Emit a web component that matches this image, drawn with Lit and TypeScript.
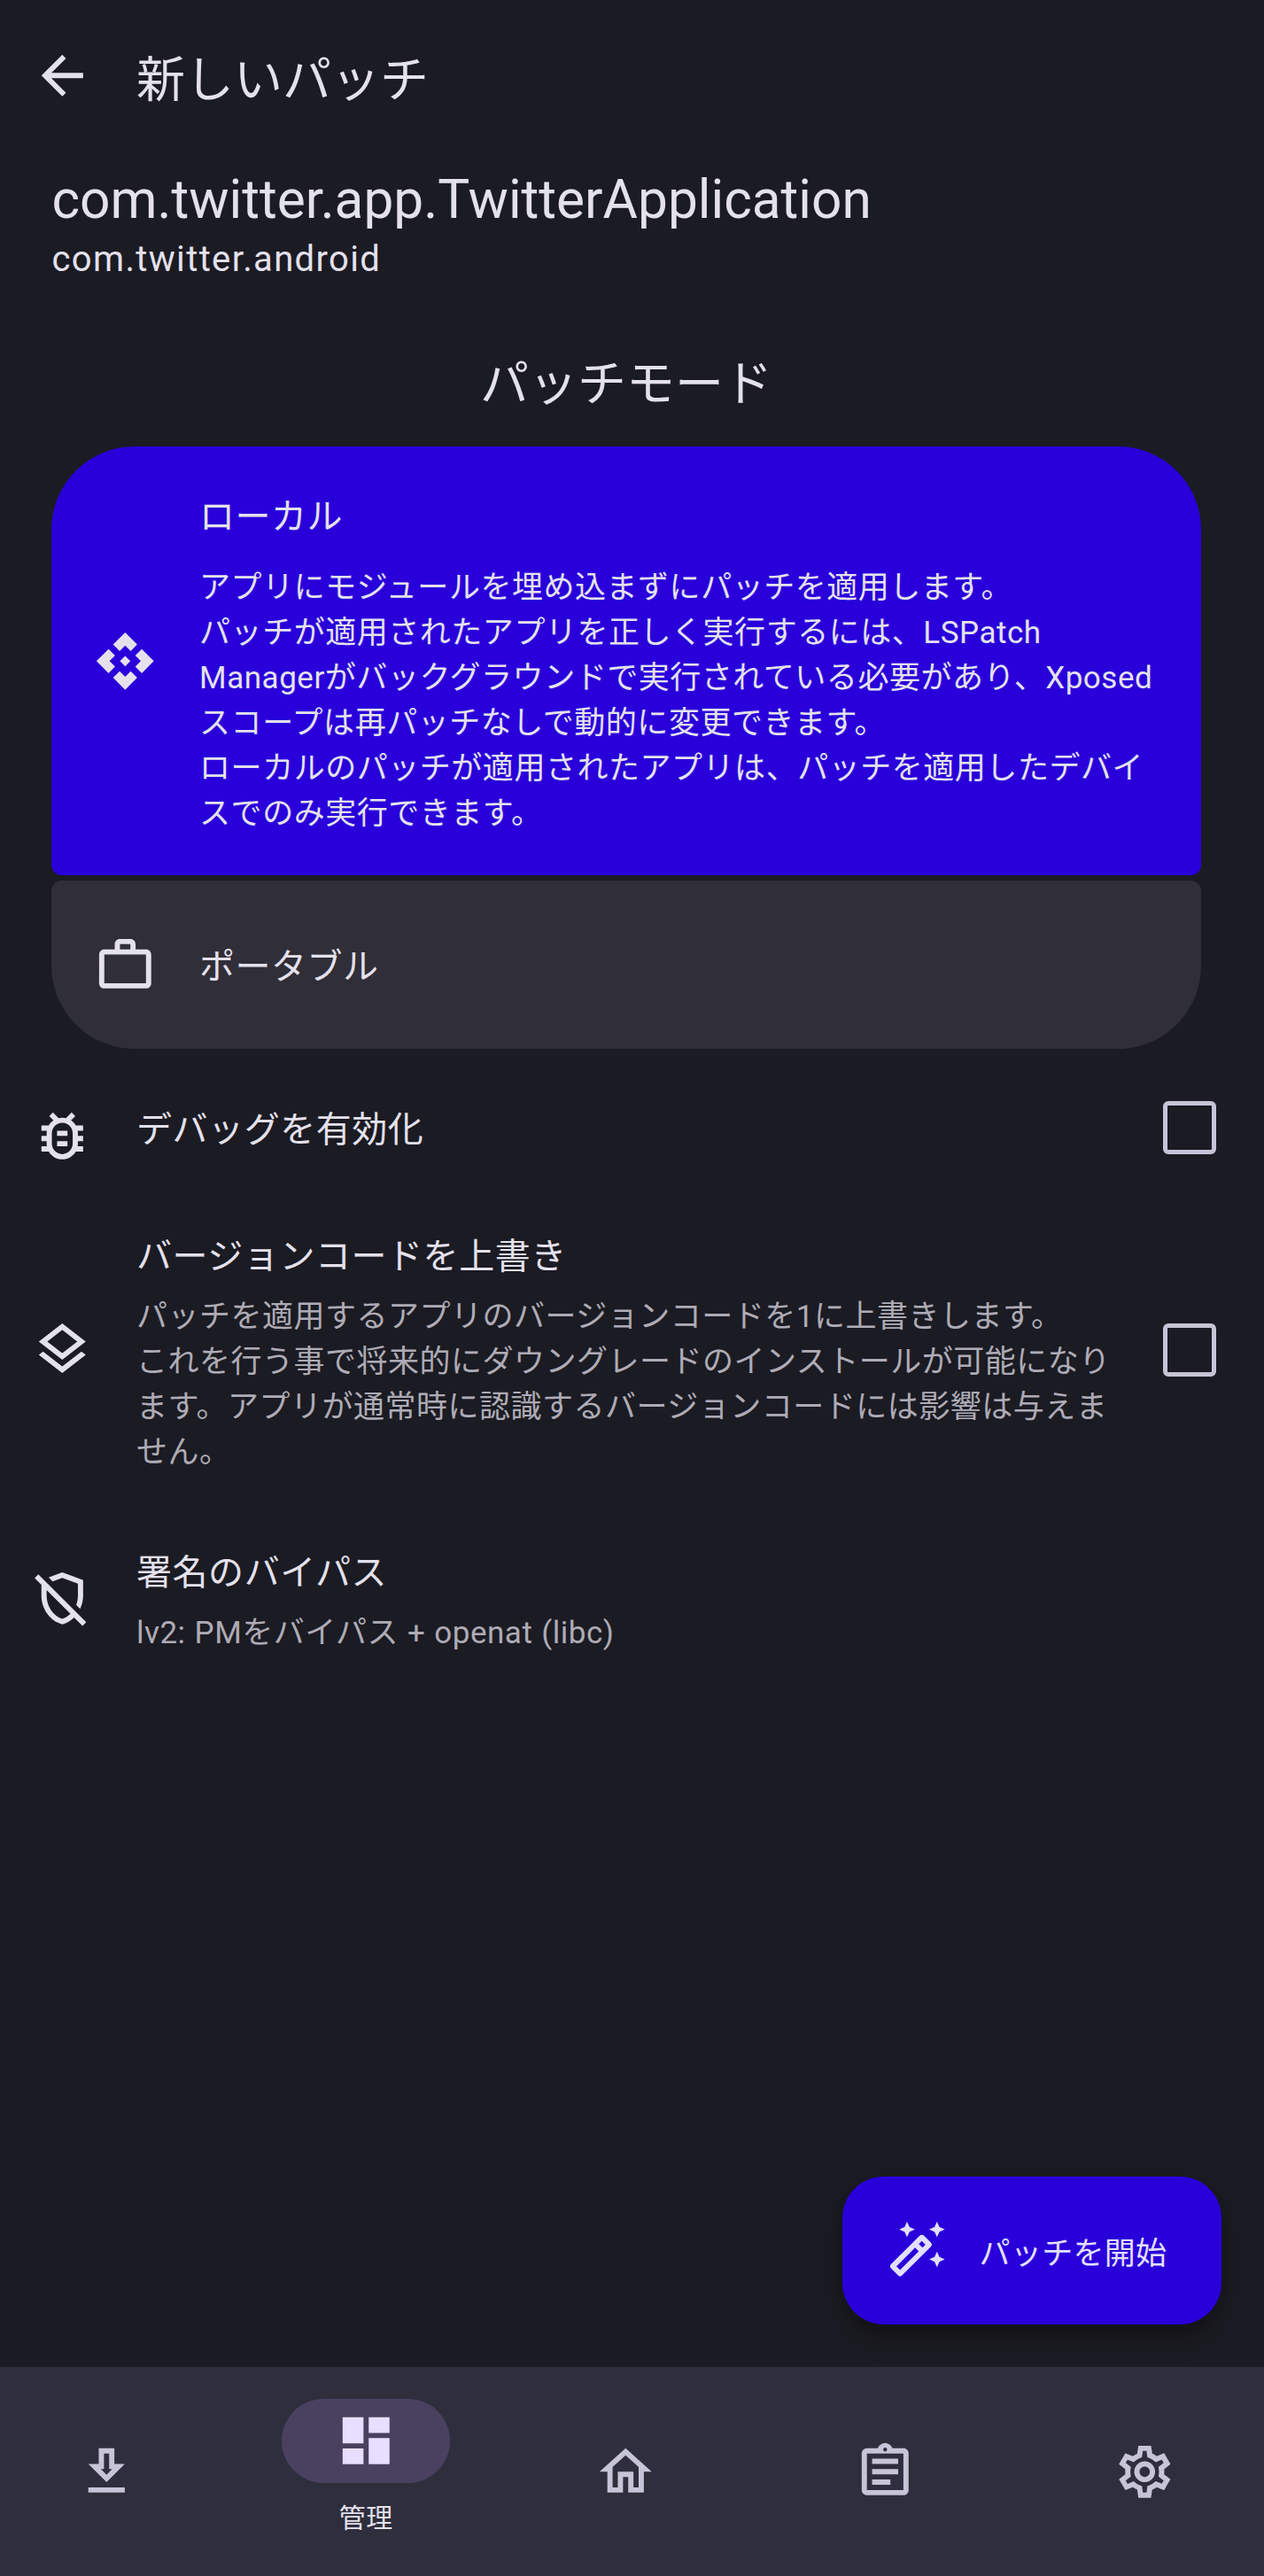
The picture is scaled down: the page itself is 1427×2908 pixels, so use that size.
import { LitElement, html, css, svg } from "lit";
import { customElement, property, state } from "lit/decorators.js";

const ICONS: Record<string, string> = {
  back: "M20 11H7.83l5.59-5.59L12 4l-8 8 8 8 1.41-1.41L7.83 13H20v-2z",
  api: "M14 12l-2 2-2-2 2-2 2 2zm-2-6l2.12 2.12 2.5-2.5L12 1 7.38 5.62l2.5 2.5L12 6zm-6 6l2.12-2.12-2.5-2.5L1 12l4.62 4.62 2.5-2.5L6 12zm12 0l-2.12 2.12 2.5 2.5L23 12l-4.62-4.62-2.5 2.5L18 12zm-6 6l-2.12-2.12-2.5 2.5L12 23l4.62-4.62-2.5-2.5L12 18z",
  work: "M14 6V4h-4v2h4zM4 8v11h16V8H4zm16-2c1.11 0 2 .89 2 2v11c0 1.11-.89 2-2 2H4c-1.11 0-2-.89-2-2l.01-11c0-1.11.88-2 1.99-2h4V4c0-1.11.89-2 2-2h4c1.11 0 2 .89 2 2v2h4z",
  bug: "M20 8h-2.81c-.45-.78-1.07-1.45-1.82-1.96L17 4.41 15.59 3l-2.17 2.17C12.96 5.06 12.49 5 12 5s-.96.06-1.41.17L8.41 3 7 4.41l1.62 1.63C7.88 6.55 7.26 7.22 6.81 8H4v2h2.09c-.05.33-.09.66-.09 1v1H4v2h2v1c0 .34.04.67.09 1H4v2h2.81c1.04 1.79 2.97 3 5.19 3s4.15-1.21 5.19-3H20v-2h-2.09c.05-.33.09-.66.09-1v-1h2v-2h-2v-1c0-.34-.04-.67-.09-1H20V8zm-4 4v3c0 2.21-1.79 4-4 4s-4-1.79-4-4v-4c0-2.21 1.79-4 4-4s4 1.79 4 4v1zm-6 2h4v2h-4zm0-4h4v2h-4z",
  layers: "M11.99 18.54l-7.37-5.73L3 14.07l9 7 9-7-1.63-1.27zM12 16l7.36-5.73L21 9l-9-7-9 7 1.63 1.27L12 16zm0-11.47L17.74 9 12 13.47 6.26 9 12 4.53z",
  shieldOff: "M12 4.14l6 2.25v4.7c0 1.19-.23 2.36-.64 3.44l1.51 1.51c.72-1.53 1.13-3.22 1.13-4.95V5l-8-3-5.22 1.96 1.55 1.55L12 4.14zM2.81 2.81L1.39 4.22 4 6.83v4.26c0 5.05 3.41 9.76 8 10.91 1.72-.43 3.28-1.36 4.55-2.62l3.23 3.23 1.41-1.41L2.81 2.81zM12 19.92c-3.45-1.13-6-4.82-6-8.83V8.83l9.14 9.14c-.9.88-1.96 1.56-3.14 1.95z",
  wand: "M20 7l.94-2.06L23 4l-2.06-.94L20 1l-.94 2.06L17 4l2.06.94zM8.5 7l.94-2.06L11.5 4l-2.06-.94L8.5 1l-.94 2.06L5.5 4l2.06.94zM20 12.5l-.94 2.06-2.06.94 2.06.94.94 2.06.94-2.06L23 15.5l-2.06-.94zM17.71 9.12l-2.83-2.83C14.68 6.1 14.43 6 14.17 6c-.26 0-.51.1-.71.29L2.29 17.46c-.39.39-.39 1.02 0 1.41l2.83 2.83c.2.2.45.3.71.3s.51-.1.71-.29l11.17-11.17c.39-.39.39-1.03 0-1.42zM14.17 8.42l1.41 1.41L14.41 11 13 9.59l1.17-1.17zM5.83 19.59l-1.41-1.41L11.59 11 13 12.41l-7.17 7.18z",
  download: "M13 5v6h1.17L12 13.17 9.83 11H11V5h2m2-2H9v6H5l7 7 7-7h-4V3zm4 15H5v2h14v-2z",
  dashboard: "M3 13h8V3H3v10zm0 8h8v-6H3v6zm10 0h8V11h-8v10zm0-18v6h8V3h-8z",
  home: "M12 5.69l5 4.5V18h-2v-6H9v6H7v-7.81l5-4.5M12 3L2 12h3v8h6v-6h2v6h6v-8h3L12 3z",
  assignment: "M7 15h7v2H7zm0-4h10v2H7zm0-4h10v2H7zm12-4h-4.18C14.4 1.84 13.3 1 12 1c-1.3 0-2.4.84-2.82 2H5c-.14 0-.27.01-.4.04-.39.08-.74.28-1.01.55-.18.18-.33.4-.43.64-.1.23-.16.49-.16.77v14c0 .27.06.54.16.78s.25.45.43.64c.27.27.62.47 1.01.55.13.02.26.03.4.03h14c1.1 0 2-.9 2-2V5c0-1.1-.9-2-2-2zm-7-.25c.41 0 .75.34.75.75s-.34.75-.75.75-.75-.34-.75-.75.34-.75.75-.75zM19 19H5V5h14v14z",
  settings: "M19.44 12.99l.01-.02c.04-.32.08-.64.08-.99 0-.34-.03-.66-.07-.98l.01.02 2.44-1.92-2.43-4.22-2.87 1.16.01.01c-.52-.4-1.09-.74-1.71-1h.01L14.44 2H9.57l-.44 3.07h.01c-.62.26-1.19.6-1.71 1l.01-.01-2.88-1.17-2.44 4.22 2.44 1.92.01-.02c-.04.32-.07.65-.07.98 0 .35.03.68.08 1l-.01-.02-2.1 1.65-.33.26 2.43 4.2 2.88-1.15-.02-.04c.53.41 1.1.75 1.73 1.01h-.03L9.58 22h4.85s.03-.18.06-.42l.38-2.65h-.01c.62-.26 1.2-.6 1.73-1.01l-.02.04 2.88 1.15 2.43-4.2s-.14-.12-.33-.26l-2.11-1.66zm-1.99-1.72c.04.31.05.52.05.73 0 .21-.02.43-.05.73l-.14 1.13.89.7 1.08.84-.7 1.21-1.27-.51-1.04-.42-.9.68c-.43.32-.84.56-1.25.73l-1.06.43-.16 1.13-.2 1.35h-1.4l-.19-1.35-.16-1.13-1.06-.43c-.43-.18-.83-.41-1.23-.71l-.91-.7-1.06.43-1.27.51-.7-1.21 1.08-.84.89-.7-.14-1.13c-.03-.31-.05-.54-.05-.74s.02-.43.05-.73l.14-1.13-.89-.7-1.08-.84.7-1.21 1.27.51 1.04.42.9-.68c.43-.32.84-.56 1.25-.73l1.06-.43.16-1.13.2-1.35h1.39l.19 1.35.16 1.13 1.06.43c.43.18.83.41 1.23.71l.91.7 1.06-.43 1.27-.51.7 1.21-1.07.85-.89.7.14 1.13zM12 8c-2.21 0-4 1.79-4 4s1.79 4 4 4 4-1.79 4-4-1.79-4-4-4zm0 6c-1.1 0-2-.9-2-2s.9-2 2-2 2 .9 2 2-.9 2-2 2z",
};

@customElement("app-icon")
export class AppIcon extends LitElement {
  static styles = css`
    :host { display: block; flex: none; width: 70.6px; height: 70.6px; }
    .glyph { display: block; width: 100%; height: 100%; fill: currentColor; }
  `;
  @property() name = "";
  render() {
    return html`<svg class="glyph" viewBox="0 0 24 24" aria-hidden="true">
      ${svg`<path d=${ICONS[this.name] ?? ""}></path>`}
    </svg>`;
  }
}

@customElement("setting-row")
export class SettingRow extends LitElement {
  static styles = css`
    :host { display: block; }
    .row { display: flex; align-items: center; padding: 0 54px 0 35px; }
    .body { flex: 1; margin: 6.5px 0 0 48.4px; white-space: nowrap; }
    .single .body { margin-top: 7px; }
    .single .icon { margin-top: 19px; }
    .title { font-size: 40px; line-height: 60px; letter-spacing: 0.55px; color: #e4e1ec; }
    .detail {
      margin-top: 12px; font-size: 35px; line-height: 51px;
      letter-spacing: 0.5px; word-spacing: 0.8px; color: #aeabb6;
    }
    .box {
      box-sizing: border-box; flex: none; width: 60px; height: 60px;
      border: 5.5px solid #c8c4d7; border-radius: 6px;
    }
  `;
  @property() icon = "";
  @property() label = "";
  @property({ attribute: false }) lines: string[] = [];
  @property({ type: Boolean }) checkable = false;
  @state() private checked = false;
  render() {
    return html`<div class="row ${this.lines.length ? "" : "single"}">
      <app-icon class="icon" name=${this.icon}></app-icon>
      <div class="body">
        <div class="title">${this.label}</div>
        ${this.lines.length
          ? html`<div class="detail">${this.lines.map((l) => html`<div>${l}</div>`)}</div>`
          : null}
      </div>
      ${this.checkable
        ? html`<div class="box" role="checkbox" aria-checked=${this.checked}
            @click=${() => (this.checked = !this.checked)}></div>`
        : null}
    </div>`;
  }
}

const LOCAL_LINES = [
  "アプリにモジュールを埋め込まずにパッチを適用します。",
  "パッチが適用されたアプリを正しく実行するには、LSPatch",
  "Managerがバックグラウンドで実行されている必要があり、Xposed",
  "スコープは再パッチなしで動的に変更できます。",
  "ローカルのパッチが適用されたアプリは、パッチを適用したデバイ",
  "スでのみ実行できます。",
];

const VERSION_LINES = [
  "パッチを適用するアプリのバージョンコードを1に上書きします。",
  "これを行う事で将来的にダウングレードのインストールが可能になり",
  "ます。アプリが通常時に認識するバージョンコードには影響は与えま",
  "せん。",
];

const TABS = [
  { icon: "download", label: "" },
  { icon: "dashboard", label: "管理" },
  { icon: "home", label: "" },
  { icon: "assignment", label: "" },
  { icon: "settings", label: "" },
];

@customElement("app-root")
export class AppRoot extends LitElement {
  static styles = css`
    :host {
      display: flex; flex-direction: column; box-sizing: border-box;
      width: 100%; height: 2908px; overflow: hidden;
      background: #1b1b23; color: #e4e1ec;
      font-family: Roboto, "Noto Sans CJK JP", sans-serif;
    }
    .bar { display: flex; align-items: center; height: 171.5px; padding-left: 35px; }
    .bar-title { margin: 9px 0 0 48.4px; font-size: 55px; line-height: 70px; }
    .content { flex: 1; display: flex; flex-direction: column; }
    .app { padding: 14.5px 58.5px 0; }
    .app-name { font-size: 60.4px; line-height: 79px; }
    .package { font-size: 40px; line-height: 56px; letter-spacing: 1.35px; }
    .mode { margin-top: 77px; width: 1414px; text-align: center; font-size: 55px; line-height: 70px; }
    .modes { display: flex; flex-direction: column; gap: 6px; margin: 36px 71px 0 58px; }
    .card {
      display: flex; align-items: center; box-sizing: border-box;
      padding: 0 47px 0 48px; white-space: nowrap;
    }
    .local { height: 484px; background: #2900da; border-radius: 94px 94px 12px 12px; }
    .portable { height: 189.5px; padding-top: 1px; background: #302e38; border-radius: 12px 12px 94px 94px; }
    .card-body { margin-left: 48.5px; padding-top: 5px; }
    .card-title { font-size: 40px; line-height: 60px; letter-spacing: 0.45px; }
    .card-detail { margin-top: 24px; font-size: 35px; line-height: 51px; letter-spacing: 0.53px; word-spacing: 0.8px; }
    .debug { margin-top: 44.7px; }
    .version { margin-top: 64.5px; }
    .sign { margin-top: 75.2px; }
    .fab-row { flex: 1; display: flex; justify-content: flex-end; align-items: flex-end; padding: 0 48px 48.5px; }
    .fab {
      display: flex; align-items: center; box-sizing: border-box;
      width: 428px; height: 166.5px; padding-left: 48px; border-radius: 47px;
      background: #2900da; color: #e2dfff;
      box-shadow: 0 16px 24px -2px rgba(14, 15, 12, 0.5), 0 6px 12px -3px rgba(14, 15, 12, 0.3);
    }
    .fab-label { margin: 8.5px 0 0 36px; font-size: 35px; line-height: 50px; letter-spacing: 0.3px; }
    .nav {
      display: grid; grid-template-columns: repeat(5, 240.5px); column-gap: 52.5px;
      flex: none; height: 236px; background: #2f2e3d; color: #c8c4d7;
    }
    .tab { display: flex; flex-direction: column; align-items: center; justify-content: center; }
    .pill { display: flex; align-items: center; justify-content: center; width: 190px; height: 95px; border-radius: 47.5px; }
    .active { justify-content: flex-start; padding-top: 36px; }
    .active .pill { background: #4a4160; color: #e8deff; }
    .tab-label { margin-top: 19.5px; font-size: 30px; line-height: 40px; letter-spacing: 0.5px; color: #e4e1ec; }
  `;

  @state() private tab = 1;

  render() {
    return html`
      <div class="bar">
        <app-icon name="back"></app-icon>
        <div class="bar-title">新しいパッチ</div>
      </div>
      <div class="content">
        <div class="app">
          <div class="app-name">com.twitter.app.TwitterApplication</div>
          <div class="package">com.twitter.android</div>
        </div>
        <div class="mode">パッチモード</div>
        <div class="modes">
          <div class="card local">
            <app-icon name="api"></app-icon>
            <div class="card-body">
              <div class="card-title">ローカル</div>
              <div class="card-detail">${LOCAL_LINES.map((l) => html`<div>${l}</div>`)}</div>
            </div>
          </div>
          <div class="card portable">
            <app-icon name="work"></app-icon>
            <div class="card-body"><div class="card-title">ポータブル</div></div>
          </div>
        </div>
        <setting-row class="debug" icon="bug" label="デバッグを有効化" checkable></setting-row>
        <setting-row class="version" icon="layers" label="バージョンコードを上書き" .lines=${VERSION_LINES} checkable></setting-row>
        <setting-row class="sign" icon="shieldOff" label="署名のバイパス" .lines=${["lv2: PMをバイパス + openat (libc)"]}></setting-row>
        <div class="fab-row">
          <div class="fab">
            <app-icon name="wand"></app-icon>
            <div class="fab-label">パッチを開始</div>
          </div>
        </div>
      </div>
      <div class="nav">
        ${TABS.map(
          (t, i) => html`<div class="tab ${i === this.tab ? "active" : ""}">
            <div class="pill"><app-icon name=${t.icon}></app-icon></div>
            ${t.label ? html`<div class="tab-label">${t.label}</div>` : null}
          </div>`
        )}
      </div>
    `;
  }
}
